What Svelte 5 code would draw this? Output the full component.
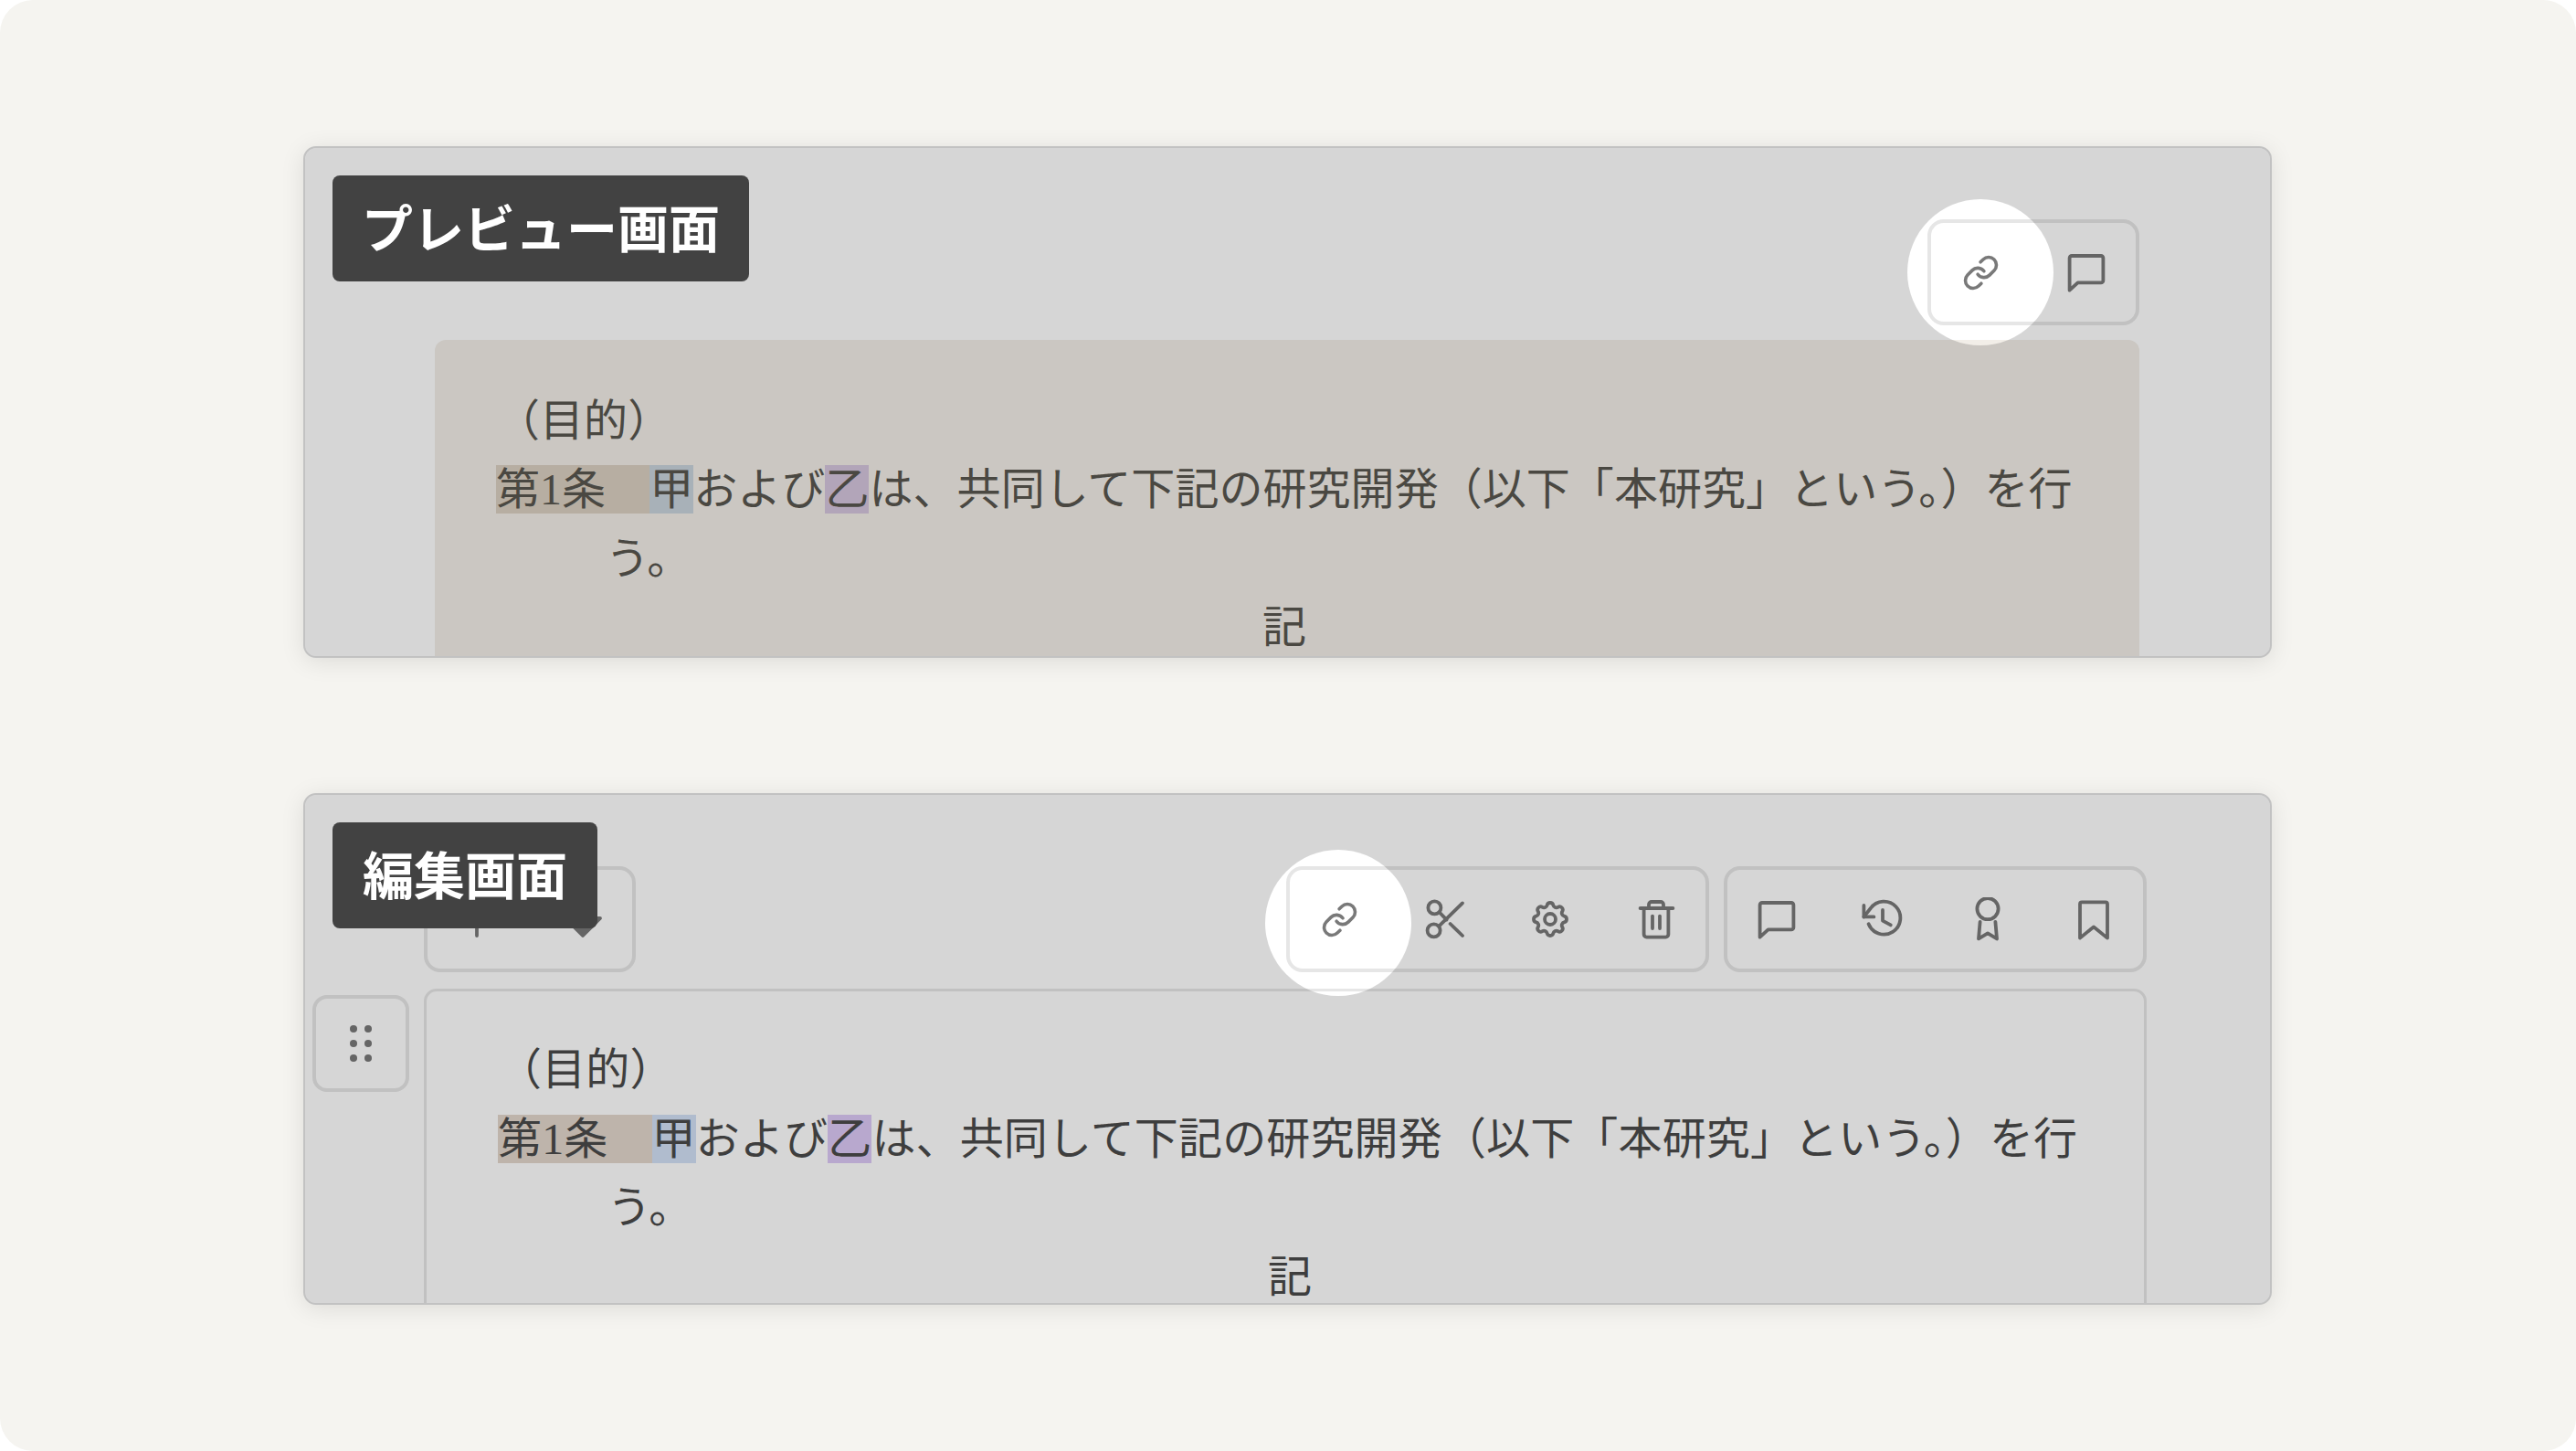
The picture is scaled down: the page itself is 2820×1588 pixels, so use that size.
<script>
  const icons = {
    link: [
      'M10 13a5 5 0 0 0 7.54.54l3-3a5 5 0 0 0-7.07-7.07l-1.72 1.71',
      'M14 11a5 5 0 0 0-7.54-.54l-3 3a5 5 0 0 0 7.07 7.07l1.71-1.71'
    ],
    comment: ['M4 3h16a1.2 1.2 0 0 1 1.2 1.2v12.3a1.2 1.2 0 0 1-1.2 1.2H7.3l-4.5 4.1V4.2A1.2 1.2 0 0 1 4 3z'],
    scissors: [
      'M9.7 5.7a3.5 3.5 0 1 1-7 0a3.5 3.5 0 1 1 7 0z',
      'M9.3 18.2a3.5 3.5 0 1 1-7 0a3.5 3.5 0 1 1 7 0z',
      'M21.5 3.2L8.6 15.8',
      'M8.8 8.1L12.8 12.3',
      'M14.8 14.5L21.5 21'
    ],
    gear: [
      'M10.325 4.317c.426 -1.756 2.924 -1.756 3.35 0a1.724 1.724 0 0 0 2.573 1.066c1.543 -.94 3.31 .826 2.37 2.37a1.724 1.724 0 0 0 1.065 2.572c1.756 .426 1.756 2.924 0 3.35a1.724 1.724 0 0 0 -1.066 2.573c.94 1.543 -.826 3.31 -2.37 2.37a1.724 1.724 0 0 0 -2.572 1.065c-.426 1.756 -2.924 1.756 -3.35 0a1.724 1.724 0 0 0 -2.573 -1.066c-1.543 .94 -3.31 -.826 -2.37 -2.37a1.724 1.724 0 0 0 -1.065 -2.572c-1.756 -.426 -1.756 -2.924 0 -3.35a1.724 1.724 0 0 0 1.066 -2.573c-.94 -1.543 .826 -3.31 2.37 -2.37c1 .608 2.296 .07 2.572 -1.065z',
      'M15 12a3 3 0 1 1-6 0a3 3 0 1 1 6 0z'
    ],
    trash: [
      'M3.3 6h17.9',
      'M8 6V4a1.5 1.5 0 0 1 1.5-1.5h5A1.5 1.5 0 0 1 16 4v2',
      'M5.3 6v14.3a1.5 1.5 0 0 0 1.5 1.5h10.4a1.5 1.5 0 0 0 1.5-1.5V6',
      'M10 10.3v6.7',
      'M14 10.3v6.7'
    ],
    history: [
      'M4.3 14.6A9 9 0 1 0 5.4 6L1.7 10.7',
      'M1.7 4.5v6.2h5.5',
      'M12 7v5.8l4.4 2.4'
    ],
    award: [
      'M17.8 6.3a5.8 5.8 0 1 1-11.6 0a5.8 5.8 0 1 1 11.6 0z',
      'M7.8 13.5L7 22.7l5-3l5 3l-.8-9.2'
    ],
    bookmark: ['M5.5 2.7h13a1 1 0 0 1 1 1v18.6L12 16.2l-7.5 6.1V3.7a1 1 0 0 1 1-1z'],
    plus: ['M12 3v18', 'M3 12h18'],
    caret: ['M2.5 11.5H21.5L12 21z']
  };

  const editLeft = ['scissors', 'gear', 'trash'];
  const editRight = ['comment', 'history', 'award', 'bookmark'];
  const dots = [0, 1, 2, 3, 4, 5];
</script>

{#snippet icon(name)}
  <svg class="icon" class:solid={name === 'caret'} viewBox="0 0 24 24" width="48" height="48">
    {#each icons[name] as d}
      <path {d} />
    {/each}
  </svg>
{/snippet}

{#snippet linkButton()}
  <div class="btn">
    <svg class="icon link" viewBox="0 0 24 24" width="41" height="41">
      {#each icons.link as d}
        <path {d} />
      {/each}
    </svg>
    <span class="spot"></span>
  </div>
{/snippet}

{#snippet clause()}
  <p class="line">（目的）</p>
  <p class="line hang"><span class="hl art">第1条　</span><span class="hl a">甲</span>および<span class="hl b">乙</span>は、共同して下記の研究開発（以下「本研究」という。）を行う。</p>
  <p class="line center">記</p>
{/snippet}

<div class="page">
  <section class="panel preview">
    <div class="label">プレビュー画面</div>
    <div class="tools end">
      <div class="toolbar">
        {@render linkButton()}
        <div class="btn">{@render icon('comment')}</div>
      </div>
    </div>
    <div class="doc">
      {@render clause()}
    </div>
  </section>

  <section class="panel edit">
    <div class="label">編集画面</div>
    <div class="tools">
      <div class="toolbar">
        <div class="btn">{@render icon('plus')}</div>
        <div class="btn">{@render icon('caret')}</div>
      </div>
      <div class="group">
        <div class="toolbar">
          {@render linkButton()}
          {#each editLeft as name}
            <div class="btn">{@render icon(name)}</div>
          {/each}
        </div>
        <div class="toolbar">
          {#each editRight as name}
            <div class="btn">{@render icon(name)}</div>
          {/each}
        </div>
      </div>
    </div>
    <div class="body">
      <div class="handle">
        <div class="dots">
          {#each dots as d (d)}
            <i></i>
          {/each}
        </div>
      </div>
      <div class="doc">
        {@render clause()}
      </div>
    </div>
  </section>
</div>

<style>
  :global(body) {
    margin: 0;
    background: #fff;
    overflow: hidden;
  }

  .page {
    width: 2820px;
    height: 1588px;
    box-sizing: border-box;
    padding: 160px 0 0 332px;
    background: #f5f4f0;
    border-radius: 36px;
    display: flex;
    flex-direction: column;
    gap: 148px;
  }

  .panel {
    position: relative;
    width: 2155px;
    height: 560px;
    box-sizing: border-box;
    padding-top: 78px;
    background: #fff;
    border: 2px solid #c2c2c2;
    border-radius: 14px;
    box-shadow: 0 4px 26px rgba(0, 0, 0, 0.1);
    overflow: hidden;
  }

  .label {
    position: absolute;
    top: 30px;
    left: 30px;
    z-index: 2;
    height: 116px;
    box-sizing: border-box;
    padding: 0 32px 7px;
    display: flex;
    align-items: center;
    border-radius: 8px;
    background: #424242;
    color: #fff;
    font-family: "Noto Sans CJK JP", sans-serif;
    font-size: 56px;
    font-weight: 700;
    white-space: nowrap;
  }

  .edit .label {
    padding: 0 33px 7px;
  }

  .tools {
    display: flex;
    justify-content: space-between;
  }

  .tools.end {
    justify-content: flex-end;
  }

  .group {
    display: flex;
    gap: 16px;
  }

  .toolbar {
    display: flex;
    gap: 7px;
    height: 116px;
    box-sizing: border-box;
    border: 4px solid #e6e6e6;
    border-radius: 18px;
  }

  .btn {
    position: relative;
    width: 108.5px;
    display: flex;
    align-items: center;
    justify-content: center;
  }

  .spot {
    position: absolute;
    left: 50%;
    top: 50%;
    width: 160px;
    height: 160px;
    margin: -80px 0 0 -80px;
    border-radius: 50%;
    box-shadow: 0 0 0 3000px rgba(0, 0, 0, 0.16);
    z-index: 1;
    pointer-events: none;
  }

  .edit .spot {
    margin: -76px 0 0 -81px;
  }

  .icon {
    fill: none;
    stroke: #797979;
    stroke-width: 1.9;
    stroke-linecap: round;
    stroke-linejoin: round;
  }

  .icon.link {
    stroke-width: 2.1;
  }

  .icon.solid {
    fill: #797979;
  }

  .doc {
    font-family: "Liberation Serif", "Noto Sans CJK JP", sans-serif;
    font-size: 48px;
    font-weight: 400;
    line-height: 75.5px;
    box-sizing: border-box;
  }

  .line {
    margin: 0;
  }

  .hang {
    padding-left: 120px;
    text-indent: -120px;
  }

  .center {
    text-align: center;
    padding-right: 8px;
  }

  .preview .tools {
    padding-right: 143px;
  }

  .preview .doc {
    height: 400px;
    margin: 16px 143px 0 142px;
    padding: 50.5px 65px 0 67px;
    background: #f2eee8;
    border-radius: 12px;
    color: #59564f;
    letter-spacing: 0.05px;
  }

  .preview .art { background: #dbd0c1; }
  .preview .a { background: #c9d3dc; }
  .preview .b { background: #d5c5dd; }

  .edit .tools {
    padding: 0 135px 0 130px;
  }

  .body {
    display: flex;
    align-items: flex-start;
    gap: 16px;
    margin: 18px 135px 0 8px;
  }

  .handle {
    flex: none;
    width: 106px;
    height: 106px;
    margin-top: 7px;
    box-sizing: border-box;
    border: 4px solid #e6e6e6;
    border-radius: 16px;
    display: flex;
    align-items: center;
    justify-content: center;
  }

  .dots {
    display: grid;
    grid-template-columns: 8px 8px;
    gap: 8px;
  }

  .dots i {
    width: 8px;
    height: 8px;
    border-radius: 50%;
    background: #797979;
  }

  .edit .doc {
    flex: 1;
    height: 400px;
    padding: 48px 60px 0 78px;
    border: 3px solid #e6e6e6;
    border-radius: 14px;
    color: #4b4b4b;
    letter-spacing: 0.15px;
  }

  .edit .art { background: #e3d7cc; }
  .edit .a { background: #d2e1f6; }
  .edit .b { background: #dcc9f6; }
</style>
